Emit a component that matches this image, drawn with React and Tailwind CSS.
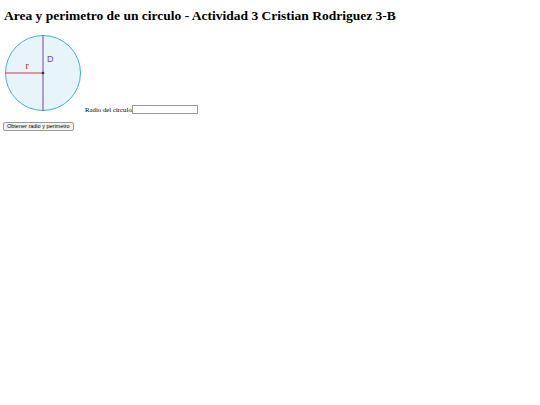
export default function App() {
  return (
    <div className="px-[4px] pt-[8px] bg-white min-h-[405px]" style={{ fontFamily: '"Liberation Serif", serif' }}>
      <h1 className="text-[13.5px] font-bold leading-[16px] text-black">
        Area y perimetro de un circulo - Actividad 3 Cristian Rodriguez 3-B
      </h1>
      <div className="mt-[10px] text-[6.8px] leading-[8px] text-black">
        <svg width="78" height="78" viewBox="0 0 78 78" className="inline-block align-baseline">
          <circle cx="39" cy="39" r="37.5" fill="#e7f5fb" stroke="#3db4c4" strokeWidth="1" />
          <line x1="39" y1="1" x2="39" y2="77" stroke="#7d3fa8" strokeWidth="1" />
          <line x1="1.5" y1="39" x2="39" y2="39" stroke="#d9363e" strokeWidth="1" />
          <circle cx="39" cy="39" r="1.3" fill="#333" />
          <text x="43" y="28" fontSize="9" fill="#7d3fa8" fontFamily="Liberation Sans, sans-serif">D</text>
          <text x="21.5" y="35" fontSize="10" fill="#c8202a" fontFamily="Liberation Serif, serif">r</text>
        </svg>
        <span className="ml-[3px]">Radio del circulo</span>
        <input type="text" className="w-[66px] h-[9px] border border-[#9a9a9a] bg-white align-baseline" />
      </div>
      <button className="block mt-[8px] ml-[-1px] px-[3px] h-[9px] text-[5.5px] leading-[7px] border border-[#9a9a9a] rounded-[2px] bg-[#f2f2f2] text-black" style={{ fontFamily: '"Liberation Sans", sans-serif' }}>
        Obtener radio y perimetro
      </button>
    </div>
  );
}
